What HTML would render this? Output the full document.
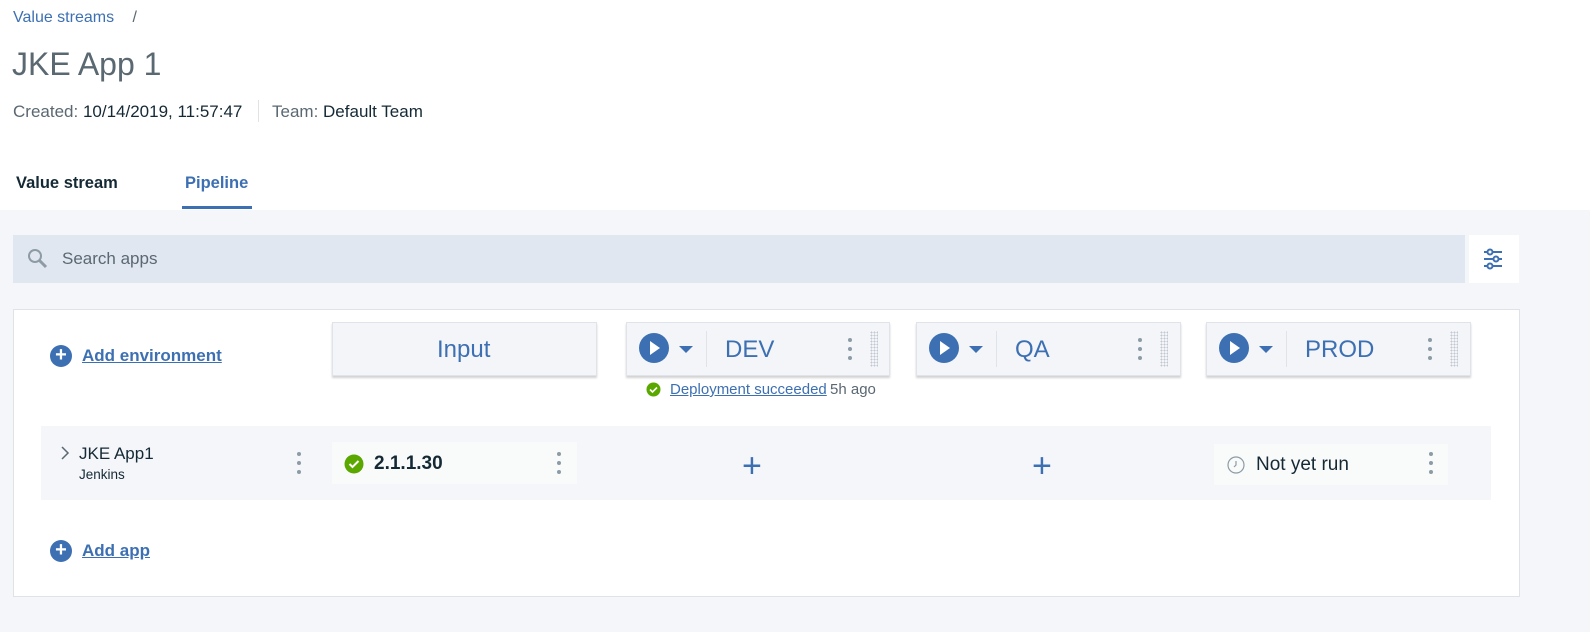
<!DOCTYPE html>
<html><head><style>
*{box-sizing:border-box;margin:0;padding:0}
body{width:1590px;height:632px;background:#f4f6fa;font-family:"Liberation Sans",sans-serif;position:relative;overflow:hidden;color:#152935}
.a{position:absolute}
.top{left:0;top:0;width:1590px;height:210px;background:#fff}
.card{background:#f3f5f9;box-shadow:0 2px 2px rgba(0,0,0,.18);border:1px solid #e0e4ea}
.env{font-size:24px;color:#3d70b2}
.dots{width:4px}
.dots i{display:block;width:4px;height:4px;border-radius:2px;background:#8c9ba5;margin-bottom:5px}
.grip{width:8px;height:36px;background-image:radial-gradient(#c0c8d0 0.8px,transparent 1px);background-size:3px 3px}
.play{width:30px;height:30px;border-radius:15px;background:#3d70b2}
.play:after{content:"";position:absolute;left:11px;top:8px;border-left:10px solid #fff;border-top:7px solid transparent;border-bottom:7px solid transparent}
.tri{width:0;height:0;border-left:7px solid transparent;border-right:7px solid transparent;border-top:7px solid #3d70b2}
.sep{width:1px;height:36px;background:#e0e4ea}
.plusc{width:22px;height:22px;border-radius:11px;background:#3d70b2;color:#fff;font-size:20px;line-height:21px;text-align:center;font-weight:bold}
.lnk{color:#3d70b2;text-decoration:underline;font-weight:bold;font-size:17px}
</style></head><body>
<div class="a top"></div>
<div class="a" style="left:13px;top:9px;font-size:16px;color:#3d70b2">Value streams <span style="color:#5a6872;margin-left:14px">/</span></div>
<div class="a" style="left:12px;top:46px;font-size:32px;color:#5a6872">JKE App 1</div>
<div class="a" style="left:13px;top:102px;font-size:17px;color:#5a6872">Created: <span style="color:#152935">10/14/2019, 11:57:47</span></div>
<div class="a" style="left:258px;top:100px;width:1px;height:22px;background:#dfe3e6"></div>
<div class="a" style="left:272px;top:102px;font-size:17px;color:#5a6872">Team: <span style="color:#152935">Default Team</span></div>
<div class="a" style="left:16px;top:174px;font-size:16.5px;font-weight:bold;color:#152935">Value stream</div>
<div class="a" style="left:185px;top:174px;font-size:16.5px;font-weight:bold;color:#3d70b2">Pipeline</div>
<div class="a" style="left:182px;top:206px;width:70px;height:3px;background:#3d70b2"></div>

<div class="a" style="left:13px;top:235px;width:1452px;height:48px;background:#e1e7f1"></div>
<svg class="a" style="left:27px;top:248px" width="22" height="22" viewBox="0 0 22 22"><circle cx="8" cy="8" r="6" fill="none" stroke="#8c9ba5" stroke-width="2"/><path d="M12.5 12.5 L19 19" stroke="#8c9ba5" stroke-width="3"/></svg>
<div class="a" style="left:62px;top:249px;font-size:17px;color:#5a6872">Search apps</div>
<div class="a" style="left:1469px;top:235px;width:50px;height:48px;background:#fff"></div>
<svg class="a" style="left:1482px;top:248px" width="22" height="22" viewBox="0 0 22 22" fill="none" stroke="#3d70b2" stroke-width="2"><path d="M2 4h18M2 11h18M2 18h18"/><circle cx="8" cy="4" r="2.5" fill="#fff"/><circle cx="14" cy="11" r="2.5" fill="#fff"/><circle cx="8" cy="18" r="2.5" fill="#fff"/></svg>

<div class="a" style="left:13px;top:309px;width:1507px;height:288px;background:#fff;border:1px solid #dfe3e8"></div>
<div class="a plusc" style="left:50px;top:345px">+</div>
<div class="a lnk" style="left:82px;top:346px">Add environment</div>

<div class="a card" style="left:332px;top:322px;width:265px;height:54px"></div>
<div class="a env" style="left:437px;top:336px">Input</div>

<div class="a card" style="left:626px;top:322px;width:264px;height:54px"></div>
<div class="a play" style="left:639px;top:333px"></div>
<div class="a tri" style="left:679px;top:346px"></div>
<div class="a sep" style="left:706px;top:331px"></div>
<div class="a env" style="left:725px;top:336px">DEV</div>
<div class="a dots" style="left:848px;top:338px"><i></i><i></i><i></i></div>
<div class="a grip" style="left:870px;top:331px"></div>
<svg class="a" style="left:646px;top:382px" width="15" height="15"><circle cx="7.5" cy="7.5" r="7" fill="#5aa700"/><path d="M4 7.5l2.5 2.5 4.5-4.5" stroke="#fff" stroke-width="1.6" fill="none"/></svg>
<div class="a" style="left:670px;top:381px;font-size:15px;color:#3d70b2;text-decoration:underline">Deployment succeeded</div>
<div class="a" style="left:830px;top:381px;font-size:15px;color:#5a6872">5h ago</div>

<div class="a card" style="left:916px;top:322px;width:265px;height:54px"></div>
<div class="a play" style="left:929px;top:333px"></div>
<div class="a tri" style="left:969px;top:346px"></div>
<div class="a sep" style="left:996px;top:331px"></div>
<div class="a env" style="left:1015px;top:336px">QA</div>
<div class="a dots" style="left:1138px;top:338px"><i></i><i></i><i></i></div>
<div class="a grip" style="left:1160px;top:331px"></div>

<div class="a card" style="left:1206px;top:322px;width:265px;height:54px"></div>
<div class="a play" style="left:1219px;top:333px"></div>
<div class="a tri" style="left:1259px;top:346px"></div>
<div class="a sep" style="left:1286px;top:331px"></div>
<div class="a env" style="left:1305px;top:336px">PROD</div>
<div class="a dots" style="left:1428px;top:338px"><i></i><i></i><i></i></div>
<div class="a grip" style="left:1450px;top:331px"></div>

<div class="a" style="left:41px;top:426px;width:1450px;height:74px;background:#f4f6fa"></div>
<svg class="a" style="left:60px;top:446px" width="10" height="14"><path d="M2 1l6 6-6 6" stroke="#5a6872" stroke-width="1.5" fill="none"/></svg>
<div class="a" style="left:79px;top:444px;font-size:17px">JKE App1</div>
<div class="a" style="left:79px;top:467px;font-size:13.5px">Jenkins</div>
<div class="a dots" style="left:297px;top:452px"><i></i><i></i><i></i></div>

<div class="a" style="left:332px;top:442px;width:245px;height:42px;background:#f9fbfb"></div>
<svg class="a" style="left:344px;top:454px" width="20" height="20"><circle cx="10" cy="10" r="9.5" fill="#5aa700"/><path d="M5.5 10l3 3 6-6" stroke="#fff" stroke-width="2" fill="none"/></svg>
<div class="a" style="left:374px;top:453px;font-size:19px;font-weight:bold">2.1.1.30</div>
<div class="a dots" style="left:557px;top:452px"><i></i><i></i><i></i></div>
<div class="a" style="left:742px;top:446px;font-size:34px;color:#3d70b2;line-height:40px">+</div>
<div class="a" style="left:1032px;top:446px;font-size:34px;color:#3d70b2;line-height:40px">+</div>

<div class="a" style="left:1214px;top:444px;width:234px;height:41px;background:#f9fbfb"></div>
<svg class="a" style="left:1227px;top:456px" width="18" height="18"><circle cx="9" cy="9" r="8" fill="none" stroke="#8c9ba5" stroke-width="1.2"/><path d="M9 5v4l-2 2" stroke="#8c9ba5" stroke-width="1.2" fill="none"/></svg>
<div class="a" style="left:1256px;top:454px;font-size:19px">Not yet run</div>
<div class="a dots" style="left:1429px;top:452px"><i></i><i></i><i></i></div>

<div class="a plusc" style="left:50px;top:540px">+</div>
<div class="a lnk" style="left:82px;top:541px">Add app</div>
</body></html>
